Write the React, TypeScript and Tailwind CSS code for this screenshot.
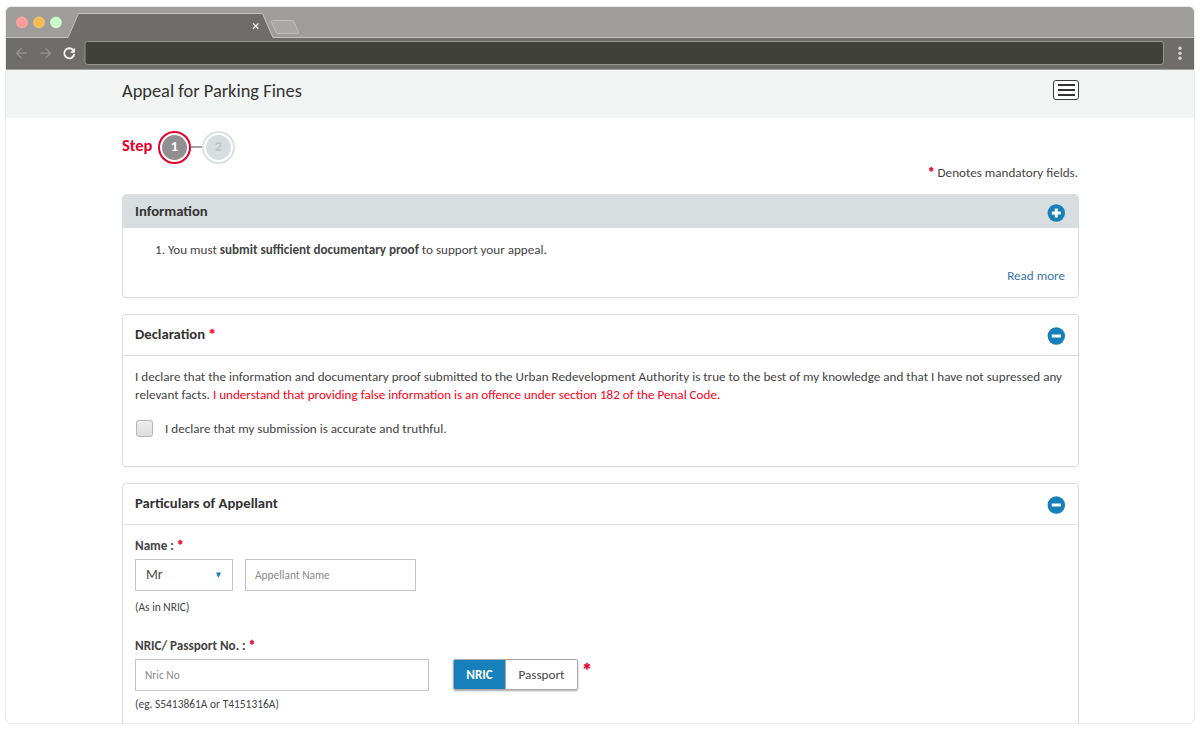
import type { ReactNode } from "react";

function BrowserChrome() {
  return (
    <svg className="block h-[63px] w-full shrink-0" viewBox="6 7 1188 63" preserveAspectRatio="none" fill="none">
      <rect x="6" y="7" width="1188" height="31" fill="#9f9d9b" />
      <rect x="6" y="38" width="1188" height="31" fill="#6e6d6b" />
      <path d="M6 69.5H1194" stroke="#a3a19f" />
      <path d="M68 38L78.5 13.5H262L273 38Z" fill="#6e6d6b" />
      <path d="M6 37.5H68L78.5 13.5H262.5L273 37.5H1194" stroke="#c3c1c0" />
      <circle cx="22" cy="22.4" r="5.5" fill="#ff9c97" stroke="#ffb5b0" strokeWidth=".6" />
      <circle cx="39" cy="22.4" r="5.5" fill="#f5bd50" stroke="#ffd27d" strokeWidth=".6" />
      <circle cx="56" cy="22.4" r="5.5" fill="#c9ffc8" stroke="#dcffda" strokeWidth=".6" />
      <path d="M253 23.4L258.4 28.8M258.4 23.4L253 28.8" stroke="#eeeeec" strokeWidth="1.3" />
      <path d="M272.5 20.5H292Q293.5 20.5 294 22L298.5 32Q299 33.5 297.5 33.5H278Q276.700 33.5 276 32L271.300 22Q270.700 20.500 272.500 20.500Z" fill="#a9a7a5" stroke="#c3c1c0" />
      <path d="M27 53.200H16.500M21.500 48.200L16.500 53.200L21.500 58.200M40 53.200H50.500M45.500 48.200L50.500 53.200L45.500 58.200" stroke="#969492" strokeWidth="1.300" />
      <path d="M73 50A5 5 0 1 0 74.200 54" stroke="#f3f3f1" strokeWidth="1.900" />
      <path d="M75 47.700V52.700H70Z" fill="#f3f3f1" />
      <rect x="85" y="41.500" width="1078.500" height="23" rx="2.500" fill="#40413a" stroke="#969691" />
      <circle cx="1180" cy="48.300" r="1.700" fill="#d4d3d1" />
      <circle cx="1180" cy="53.300" r="1.700" fill="#d4d3d1" />
      <circle cx="1180" cy="58.200" r="1.700" fill="#d4d3d1" />
    </svg>
  );
}

function ToggleIcon({ open }: { open: boolean }) {
  return (
    <svg className="size-[18px] shrink-0" viewBox="0 0 18 18">
      <circle cx="9.300" cy="9" r="8.700" fill="#1580ba" />
      <path d={open ? "M4.800 9H13.800" : "M4.800 9H13.800M9.300 4.500V13.500"} stroke="#fff" strokeWidth="3" />
    </svg>
  );
}

function Star() {
  return <span className="font-bold text-[#e4002b] [-webkit-text-stroke:0.4px_#e4002b]">*</span>;
}

function Panel({ title, open, children, className, head }: { title: ReactNode; open: boolean; children: ReactNode; className: string; head: string }) {
  return (
    <section className={`w-[957px] shrink-0 rounded-[4px] border border-[#dcdcdc] shadow-[0_1px_1px_rgba(0,0,0,0.04)] ${className}`}>
      <h2 className={`flex items-center justify-between rounded-t-[3px] pr-[13px] pl-3 text-[14.700px] font-bold text-[#333] ${head}`}>
        <span className={open ? "-mt-[2px]" : "mt-0"}>{title}</span>
        <span className="mt-[2px]"><ToggleIcon open={open} /></span>
      </h2>
      {children}
    </section>
  );
}

export default function App() {
  return (
    <div className="h-[730px] overflow-hidden bg-white pt-[7px] pl-[6px] font-['Carlito','Lato',sans-serif] text-[#444]">
      <div className="flex h-[716px] w-[1188px] flex-col overflow-hidden rounded-[5px] shadow-[0_0_0_1px_#ececec]">
        <BrowserChrome />
        <header className="flex h-12 shrink-0 items-center justify-between bg-[#f3f5f5] pr-[115px] pl-[116px]">
          <h1 className="-mt-[6px] text-[18.400px] text-[#333]">Appeal for Parking Fines</h1>
          <button aria-label="Menu" className="-mt-[8px] flex h-[20px] w-[26px] flex-col items-center justify-center gap-[3px] rounded-[3px] border border-[#3c3c3a] bg-white">
            <span className="h-[2px] w-[17px] bg-[#333]" />
            <span className="h-[2px] w-[17px] bg-[#333]" />
            <span className="h-[2px] w-[17px] bg-[#333]" />
          </button>
        </header>
        <main className="flex flex-col pl-[116px] text-[13.120px]">
          <div className="mt-[13px] flex h-8 items-center">
            <span className="-mt-[4px] w-[36px] text-[16.500px] font-bold text-[#e4002b]">Step</span>
            <span className="flex size-[33px] items-center justify-center rounded-full border-2 border-[#e4002b]">
              <span className="flex size-[25px] items-center justify-center rounded-full bg-[#918f8f] text-[14.500px] font-black text-white">1</span>
            </span>
            <span className="h-[2px] w-[11px] bg-[#a2a0a0]" />
            <span className="flex size-[33px] items-center justify-center rounded-full border-2 border-[#dce1e3]">
              <span className="flex size-[25px] items-center justify-center rounded-full bg-[#d8dddf] text-[14.500px] font-black text-[#bfc4c7]">2</span>
            </span>
          </div>
          <p className="h-[31px] w-[956px] pt-px text-right leading-[19px]"><Star /> Denotes mandatory fields.</p>
          <Panel title="Information" open={false} className="h-[104px]" head="h-[33px] bg-[#d8dddf]">
            <ol className="pt-[13px] pl-8 leading-[19px]">
              <li>1. You must <b>submit sufficient documentary proof</b> to support your appeal.</li>
            </ol>
            <div className="pt-[7px] pr-[13px] text-right leading-[19px] text-[#3776ae]"><a>Read more</a></div>
          </Panel>
          <Panel title={<>Declaration <span className="text-[#ff0022] [-webkit-text-stroke:0.4px_#ff0022]">*</span></>} open className="mt-4 h-[153px]" head="h-[41px] border-b border-[#dcdcdc]">
            <p className="pt-3 pl-3 leading-[18px] whitespace-nowrap">
              I declare that the information and documentary proof submitted to the Urban Redevelopment Authority is true to the best of my knowledge and that I have not supressed any<br />
              relevant facts. <span className="text-[#fc0020]">I understand that providing false information is an offence under section 182 of the Penal Code.</span>
            </p>
            <label className="mt-[16px] flex h-[17px] items-center gap-[12px] pl-[13px]">
              <span className="size-[17px] rounded-[3px] border border-[#b5b5b5] bg-linear-to-b from-[#eeeeee] to-[#dedede]" />
              <span className="mt-[2px]">I declare that my submission is accurate and truthful.</span>
            </label>
          </Panel>
          <Panel title="Particulars of Appellant" open className="mt-4 h-[300px]" head="h-[41px] border-b border-[#e4e4e4]">
            <div className="flex flex-col pl-3">
              <div className="mt-[12px] h-[22px] font-bold leading-[19px]">Name : <Star /></div>
              <div className="flex h-8 gap-3">
                <div className="flex w-[98px] items-center justify-between border border-[#c5c5c5] pr-[11px] pl-[10px] text-[13.800px]">
                  <span>Mr</span>
                  <svg className="h-[6px] w-[5px]" viewBox="0 0 5 6"><path d="M0 .500H5L2.500 6Z" fill="#1580ba" /></svg>
                </div>
                <div className="flex w-[171px] items-center border border-[#c5c5c5] pt-[2px] pl-[9px] text-[11.400px] text-[#8c8c8c]">Appellant Name</div>
              </div>
              <div className="mt-[7px] h-[39px] text-[11.450px] leading-[18px]">(As in NRIC)</div>
              <div className="h-[22px] font-bold leading-[19px]">NRIC/ Passport No. : <Star /></div>
              <div className="flex h-8">
                <div className="flex w-[294px] items-center border border-[#c5c5c5] pt-[2px] pl-[9px] text-[11.400px] text-[#8c8c8c]">Nric No</div>
                <div className="ml-6 flex h-[31px] w-[125px] overflow-hidden rounded-[2px] border border-[#aaa] shadow-[0_1px_2px_rgba(0,0,0,0.35)]">
                  <span className="flex w-[52px] items-center justify-center border-r border-[#aaa] bg-[#1580ba] pt-[2px] font-bold text-white">NRIC</span>
                  <span className="flex grow items-center justify-center pt-[2px]">Passport</span>
                </div>
                <span className="ml-1 text-[20px] leading-[23px]"><Star /></span>
              </div>
              <div className="mt-[4px] text-[11.450px] leading-[19px]">(eg. S5413861A or T4151316A)</div>
            </div>
          </Panel>
        </main>
      </div>
    </div>
  );
}
